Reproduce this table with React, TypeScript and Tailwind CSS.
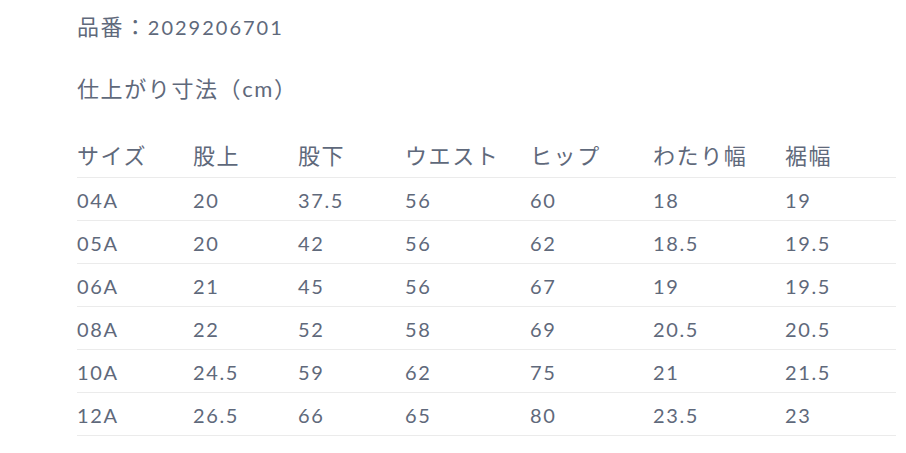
const cols = ["サイズ", "股上", "股下", "ウエスト", "ヒップ", "わたり幅", "裾幅"];
const widths = ["w-[116px]", "w-[105px]", "w-[107px]", "w-[125px]", "w-[123px]", "w-[132px]", ""];

const rows = [
  ["04A", "20", "37.5", "56", "60", "18", "19"],
  ["05A", "20", "42", "56", "62", "18.5", "19.5"],
  ["06A", "21", "45", "56", "67", "19", "19.5"],
  ["08A", "22", "52", "58", "69", "20.5", "20.5"],
  ["10A", "24.5", "59", "62", "75", "21", "21.5"],
  ["12A", "26.5", "66", "65", "80", "23.5", "23"],
];

export default function App() {
  return (
    <div className="min-h-screen bg-white pl-[77px] pr-[10px] text-[20px] tracking-[0.08em] text-[#5f697b] [font-family:Lato,'Noto_Sans_CJK_JP',sans-serif]">
      <p className="mt-[7px] h-[40px] leading-[40px]">
        <span className="text-[22px]">品番：</span>
        <span className="tracking-[0.1em]">2029206701</span>
      </p>
      <h3 className="mt-[22px] h-[40px] text-[22px] leading-[40px]">仕上がり寸法（cm）</h3>
      <table className="mt-[25px] w-[819px] table-fixed border-collapse">
        <thead>
          <tr className="h-[43px] border-b border-[#ebebeb]">
            {cols.map((c, i) => (
              <th key={c} className={`${widths[i]} p-0 text-left text-[22px] font-normal`}>
                {c}
              </th>
            ))}
          </tr>
        </thead>
        <tbody>
          {rows.map((r) => (
            <tr key={r[0]} className="h-[43px] border-b border-[#ebebeb]">
              {r.map((v, i) => (
                <td key={i} className="p-0 pt-[2px]">
                  {v}
                </td>
              ))}
            </tr>
          ))}
        </tbody>
      </table>
    </div>
  );
}
